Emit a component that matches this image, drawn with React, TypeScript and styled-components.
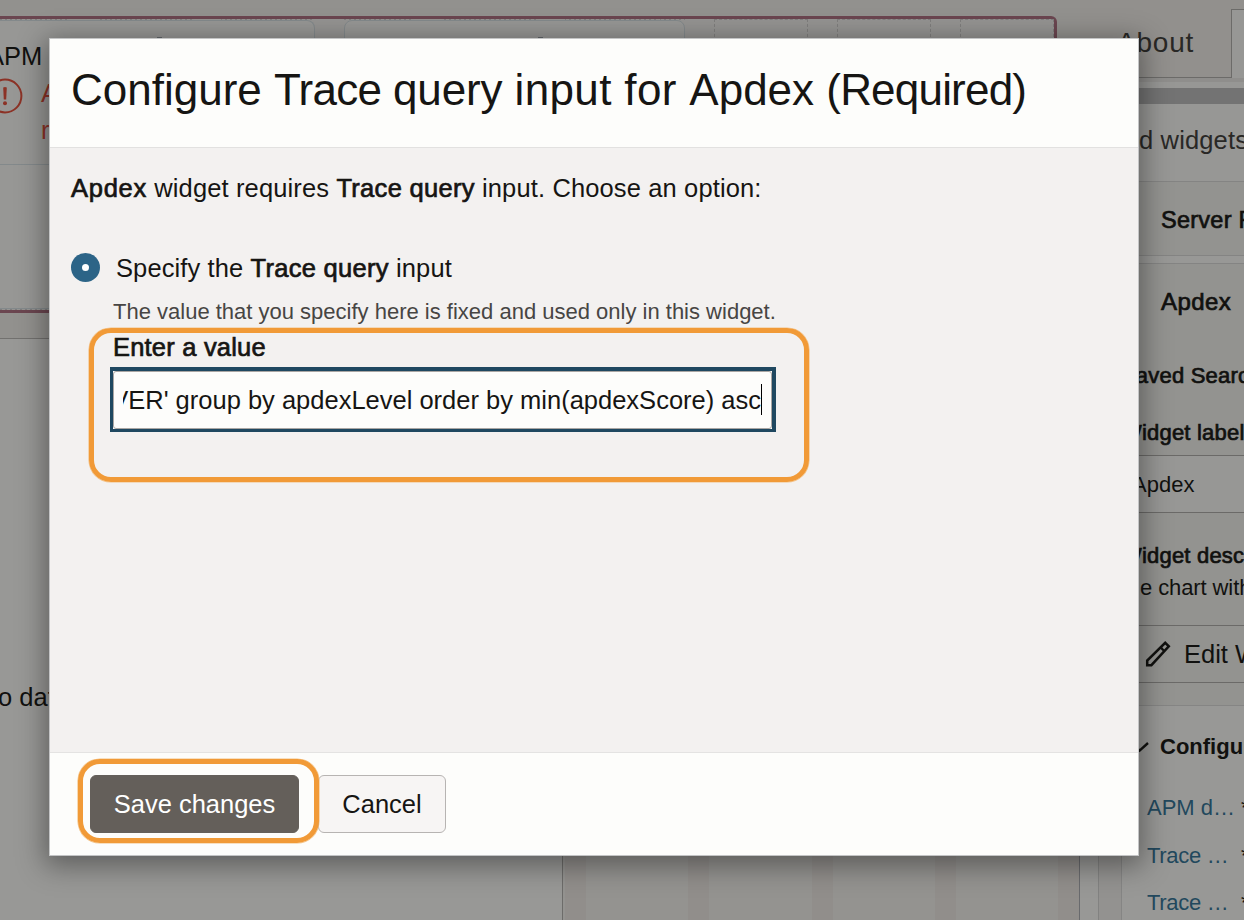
import React from "react";
import styled, { createGlobalStyle, css } from "styled-components";

const Global = createGlobalStyle`
  *, *::before, *::after { box-sizing: border-box; }
  body { margin: 0; background: #989896; overflow: hidden; }
`;

type TextProps = {
  $size?: number;
  $line?: number;
  $color?: string;
  $track?: number;
  $medium?: boolean;
  $bold?: boolean;
};

const medium = css`-webkit-text-stroke: 0.7px currentColor;`;

const Text = styled.div<TextProps>`
  font-size: ${(p) => p.$size ?? 25.5}px;
  line-height: ${(p) => p.$line ?? 30}px;
  color: ${(p) => p.$color ?? "#161513"};
  letter-spacing: ${(p) => p.$track ?? 0}px;
  font-weight: ${(p) => (p.$bold ? 700 : 400)};
  white-space: nowrap;
  ${(p) => p.$medium && medium}
`;

const Strong = styled.span<{ $track?: number }>`
  ${medium}
  letter-spacing: ${(p) => p.$track ?? 0.3}px;
`;

const Page = styled.div`
  position: relative;
  display: flex;
  width: 1244px;
  height: 920px;
  overflow: hidden;
  background: #92918e;
  font-family: "Liberation Sans", Arial, sans-serif;
`;

/* ---------- dashboard canvas ---------- */

const Canvas = styled.main`
  width: 1080px;
  flex-shrink: 0;
  padding-top: 16px;
  display: flex;
  flex-direction: column;
`;

const SelectedRow = styled.section`
  display: flex;
  width: 1057px;
  height: 297px;
  border: 3px solid #6b4650;
  border-left: 0;
  border-top-right-radius: 6px;
  background: #959492;
`;

const slotDots = css`
  background:
    repeating-linear-gradient(90deg, transparent 0 94px, #959492 94px 123px) -25px 0,
    repeating-linear-gradient(90deg, #7f7e7e 0 2px, #959492 2px 5px);
`;

const CardColumn = styled.div<{ $width: number }>`
  display: flex;
  flex-direction: column;
  flex-shrink: 0;
  width: ${(p) => p.$width}px;
  margin-right: 29px;

  &::before,
  &::after {
    content: "";
    height: 1px;
    flex-shrink: 0;
    ${slotDots}
  }
`;

const Card = styled.div<{ $first?: boolean }>`
  flex: 1;
  border: 1px solid #83898b;
  border-radius: 8px;
  background: #979795;
  ${(p) => p.$first && "border-left: 0; border-radius: 0 8px 0 0;"}
`;

const CardHead = styled.div`
  position: relative;
  height: 144px;
  padding-top: 20px;
  border-bottom: 1px solid #83898b;
`;

const DragHandle = styled.span<{ $x: number }>`
  position: absolute;
  left: ${(p) => p.$x}px;
  top: 16px;
  width: 5px;
  height: 2px;
  background: #62666a;
`;

const CardName = styled(Text)`
  margin-left: -13px;
`;

const ErrorRow = styled.div`
  display: flex;
  margin: 7px 0 0 -13px;
  gap: 18px;
`;

const ErrorText = styled.div`
  margin-top: -3px;
`;

const Slot = styled.div`
  flex-shrink: 0;
  width: 94px;
  margin-right: 29px;
  border: 1px dashed #7f7e7d;
  border-bottom: 0;

  &:last-child { margin-right: 0; }
`;

const Widgets = styled.section`
  display: flex;
  flex: 1;
  margin-top: 25px;
`;

const EmptyWidget = styled.div`
  width: 563px;
  padding-top: 343px;
  border-top: 1px solid #72716f;
  border-right: 1px solid #6d6c6a;
  background: #989896;
`;

const EmptyText = styled(Text)`
  margin-left: -2px;
`;

const Grid = styled.div`
  display: flex;
  justify-content: space-between;
  flex: 1;
  padding-left: 2px;
  border-right: 1px solid #696a6d;
  background: #949390;
`;

const GridColumn = styled.div`
  width: 21px;
  background: #918e8b;
`;

/* ---------- settings sidebar ---------- */

const Sidebar = styled.aside`
  display: flex;
  flex-direction: column;
  width: 164px;
  overflow: hidden;
  background: #979795;
`;

const Tabs = styled.div`
  display: flex;
  flex-shrink: 0;
  height: 78px;
  background: #92908d;
`;

const Tab = styled.div`
  flex-shrink: 0;
  width: 151px;
  padding: 28px 0 0 37px;
  border-bottom: 1px solid #6c6b69;
`;

const ActiveTab = styled.div`
  flex-shrink: 0;
  width: 40px;
  margin-top: 9px;
  border: 1px solid #6c6b69;
  border-bottom: 0;
  background: #979795;
`;

const TabSeam = styled.div`
  flex-shrink: 0;
  height: 4px;
  margin-bottom: 6px;
  background: #8f8e8c;
`;

const ScrollBar = styled.div`
  flex-shrink: 0;
  height: 16px;
  background: #737373;
`;

const Block = styled.div<{ $height: number; $top: number; $left: number; $line?: string; $bg?: string }>`
  flex-shrink: 0;
  height: ${(p) => p.$height}px;
  padding: ${(p) => p.$top}px 0 0 ${(p) => p.$left}px;
  border-top: ${(p) => (p.$line ? `1px solid ${p.$line}` : "0")};
  background: ${(p) => p.$bg ?? "#939390"};
`;

const Summary = styled(Text)`
  margin-left: 19px;
`;

const EditBlock = styled(Block)`
  display: flex;
  gap: 13px;

  svg {
    flex-shrink: 0;
    margin-top: 1px;
  }
`;

const ConfigBlock = styled.div`
  display: flex;
  flex: 1;
  border-top: 1px solid #858584;
  background: #989896;
`;

const Gutter = styled.div<{ $width: number; $bg: string; $line: string }>`
  width: ${(p) => p.$width}px;
  flex-shrink: 0;
  border-right: 1px solid ${(p) => p.$line};
  background: ${(p) => p.$bg};
`;

const ConfigList = styled.div`
  padding: 26px 0 0 14px;
`;

const ConfigTitle = styled.div`
  display: flex;
  align-items: center;
  gap: 11px;
  margin-bottom: 31px;
`;

const InputLink = styled.div`
  display: flex;
  margin: 0 0 17.6px 11px;
`;

const InputName = styled(Text)`
  flex-shrink: 0;
  width: 94px;
`;

/* ---------- dialog ---------- */

const Dialog = styled.div`
  position: absolute;
  left: 49px;
  top: 38px;
  display: flex;
  flex-direction: column;
  width: 1090px;
  height: 818px;
  border: 1px solid #c3c4c5;
  background: #fdfdfb;
  box-shadow: 0 6px 26px 4px rgba(0, 0, 0, 0.38);
`;

const DialogHeader = styled.header`
  height: 109px;
  padding: 25px 0 0 21px;
  border-bottom: 1px solid #e2e1e0;
`;

const DialogTitle = styled(Text)`
  margin: 0;
`;

const Kern = styled.span<{ $track: number }>`
  letter-spacing: ${(p) => p.$track}px;
`;

const DialogBody = styled.div`
  flex: 1;
  padding: 25px 0 0 21px;
  border-bottom: 1px solid #e4e3e2;
  background: #f3f1f0;
`;

const Option = styled.div`
  display: flex;
  align-items: flex-start;
  margin-top: 50px;
  gap: 16px;
`;

const Radio = styled.span`
  display: flex;
  align-items: center;
  justify-content: center;
  width: 29px;
  height: 29px;
  border-radius: 50%;
  background: #2c6487;

  &::after {
    content: "";
    width: 7px;
    height: 7px;
    border-radius: 50%;
    background: #fff;
  }
`;

const Details = styled.div`
  margin-left: 42px;
  padding-top: 16px;
`;

const Field = styled.div`
  position: relative;
  margin-top: 7px;
`;

const Input = styled.div`
  display: flex;
  width: 666px;
  height: 65px;
  margin: 5px 0 0 -3px;
  border: solid #1f4860;
  border-width: 4px 4px 3px 3px;
  background: #fdfdfb;
`;

const InputInner = styled.div`
  display: flex;
  flex: 1;
  align-items: center;
  padding: 0 9px 0 9px;
  border: 1px solid #aaa6a3;
  border-radius: 3px;
  min-width: 0;
`;

const InputText = styled.div`
  display: flex;
  flex: 1;
  justify-content: flex-end;
  min-width: 0;
  overflow: hidden;
`;

const Caret = styled.span`
  flex-shrink: 0;
  width: 1px;
  height: 31px;
  margin-bottom: 1px;
  background: #000;
`;

const Highlight = styled.div<{ $x: number; $y: number; $w: number; $h: number }>`
  position: absolute;
  left: ${(p) => p.$x}px;
  top: ${(p) => p.$y}px;
  width: ${(p) => p.$w}px;
  height: ${(p) => p.$h}px;
  border: 5px solid #f19a37;
  border-radius: 22px;
  box-shadow: 0 0 0 0.6px #f3c183;
  pointer-events: none;
`;

const DialogFooter = styled.footer`
  position: relative;
  display: flex;
  gap: 19px;
  height: 102px;
  padding: 22px 0 0 40px;
`;

const Button = styled.button<{ $primary?: boolean }>`
  width: ${(p) => (p.$primary ? 209 : 128)}px;
  height: 58px;
  padding: 0;
  display: flex;
  align-items: center;
  justify-content: center;
  border: 1px solid ${(p) => (p.$primary ? "#645f5a" : "#b7b4b2")};
  border-radius: 6px;
  background: ${(p) => (p.$primary ? "#645f5a" : "#f7f5f4")};
  font-family: inherit;
`;

const ErrorIcon = () => (
  <svg width="36" height="36" viewBox="0 0 36 36" fill="none">
    <circle cx="18" cy="18" r="16.4" stroke="#8c3226" strokeWidth="2" />
    <path d="M16.2 9.6q1.8-1 3.6 0l-.6 12h-2.4z" fill="#8c3226" />
    <circle cx="18" cy="25.2" r="2" fill="#8c3226" />
  </svg>
);

const Pencil = () => (
  <svg width="26" height="28" viewBox="0 0 26 28" fill="none" stroke="#11110f" strokeWidth="2.5">
    <path d="M2.2 25.2v-4.6L20.2 2.8l3.6 3.6L6.4 25.2z" />
    <path d="M15.6 7.4l3.6 3.6" strokeWidth="2.3" />
  </svg>
);

const Check = () => (
  <svg width="13" height="12" viewBox="0 0 13 12" fill="none" stroke="#11110f" strokeWidth="2.4">
    <path d="M0 6l3.6 3.6L12 2" />
  </svg>
);

const inputs = ["APM d…", "Trace …", "Trace …"];
const ink = "#11110f";

export default function App() {
  return (
    <>
      <Global />
      <Page>
        <Canvas>
          <SelectedRow>
            <CardColumn $width={315}>
              <Card $first>
                <CardHead>
                  <DragHandle $x={157} />
                  <CardName $color={ink}>APM</CardName>
                  <ErrorRow>
                    <ErrorIcon />
                    <ErrorText>
                      <Text $color="#8c3226" $line={37}>A</Text>
                      <Text $color="#8c3226" $line={37}>r</Text>
                    </ErrorText>
                  </ErrorRow>
                </CardHead>
              </Card>
            </CardColumn>
            <CardColumn $width={341}>
              <Card>
                <CardHead>
                  <DragHandle $x={193} />
                </CardHead>
              </Card>
            </CardColumn>
            <Slot />
            <Slot />
            <Slot />
          </SelectedRow>
          <Widgets>
            <EmptyWidget>
              <EmptyText $color={ink}>o dat</EmptyText>
            </EmptyWidget>
            <Grid>
              {[0, 1, 2, 3, 4].map((n) => (
                <GridColumn key={n} />
              ))}
            </Grid>
          </Widgets>
        </Canvas>

        <Sidebar>
          <Tabs>
            <Tab>
              <Text $size={28} $track={0.8} $color="#292826">About</Text>
            </Tab>
            <ActiveTab />
          </Tabs>
          <TabSeam />
          <ScrollBar />
          <Block $height={77} $top={21} $left={59} $bg="#979795">
            <Text $track={0.15} $color="#292826">d widgets</Text>
          </Block>
          <Block $height={74} $top={23} $left={81} $line="#848483">
            <Text $size={23.5} $track={0.25} $medium $color={ink}>Server R</Text>
          </Block>
          <Block $height={8} $top={0} $left={0} $line="#848483" $bg="#989896" />
          <Block $height={97} $top={23} $left={81} $line="#848483">
            <Text $size={24} $track={0.4} $medium $color={ink}>Apdex</Text>
          </Block>
          <Block $height={57} $top={1} $left={41}>
            <Text $size={22} $track={0.2} $medium $color={ink}>Saved Searc</Text>
          </Block>
          <Block $height={38} $top={1} $left={41}>
            <Text $size={22} $track={0.2} $medium $color={ink}>Widget label</Text>
          </Block>
          <Block $height={57} $top={14} $left={52} $line="#6b6a68" $bg="#979795">
            <Text $size={22} $color={ink}>Apdex</Text>
          </Block>
          <Block $height={113} $top={27} $left={41} $line="#6b6a68">
            <Text $size={22} $track={0.2} $medium $line={32} $color={ink}>Widget desc</Text>
            <Summary $size={22} $line={32} $color={ink} $track={-0.1}>e chart with</Summary>
          </Block>
          <EditBlock $height={57} $top={13} $left={65} $line="#6b6a68">
            <Pencil />
            <Text $color={ink}>Edit W</Text>
          </EditBlock>
          <Block $height={23} $top={0} $left={0} $line="#6b6a68" />
          <ConfigBlock>
            <Gutter $width={19} $bg="#989896" $line="#828281" />
            <Gutter $width={23} $bg="#939290" $line="#858584" />
            <ConfigList>
              <ConfigTitle>
                <Check />
                <Text $size={22} $bold $color={ink}>Configur</Text>
              </ConfigTitle>
              {inputs.map((name, i) => (
                <InputLink key={i}>
                  <InputName $size={22} $track={i ? -0.3 : 0} $color="#22485d">{name}</InputName>
                  <Text $size={22} $color={ink}>*</Text>
                </InputLink>
              ))}
            </ConfigList>
          </ConfigBlock>
        </Sidebar>

        <Dialog role="dialog">
          <DialogHeader>
            <DialogTitle as="h1" $size={44} $line={52} $track={0}>
              Configure <Kern $track={-0.7}>Trace </Kern>
              <Kern $track={-0.1}>query </Kern>
              <Kern $track={0.35}>input for </Kern>
              Apdex <Kern $track={-0.8}>(Required)</Kern>
            </DialogTitle>
          </DialogHeader>
          <DialogBody>
            <Text $track={0.13}>
              <Strong $track={0.75}>Apdex</Strong> widget requires <Strong>Trace query</Strong> input. Choose an option:
            </Text>
            <Option>
              <Radio />
              <Text $track={0.1}>
                Specify the <Strong>Trace query</Strong> input
              </Text>
            </Option>
            <Details>
              <Text $size={22} $line={26} $color="#474543">
                The value that you specify here is fixed and used only in this widget.
              </Text>
              <Field>
                <Text $medium $track={0.2}>Enter a value</Text>
                <Input>
                  <InputInner>
                    <InputText>
                      <Text>VER' group by apdexLevel order by min(apdexScore) asc</Text>
                    </InputText>
                    <Caret />
                  </InputInner>
                </Input>
                <Highlight $x={-24} $y={-4} $w={720} $h={154} />
              </Field>
            </Details>
          </DialogBody>
          <DialogFooter>
            <Button $primary>
              <Text $color="#fff">Save changes</Text>
            </Button>
            <Button>
              <Text>Cancel</Text>
            </Button>
            <Highlight $x={28} $y={6} $w={241} $h={84} />
          </DialogFooter>
        </Dialog>
      </Page>
    </>
  );
}
